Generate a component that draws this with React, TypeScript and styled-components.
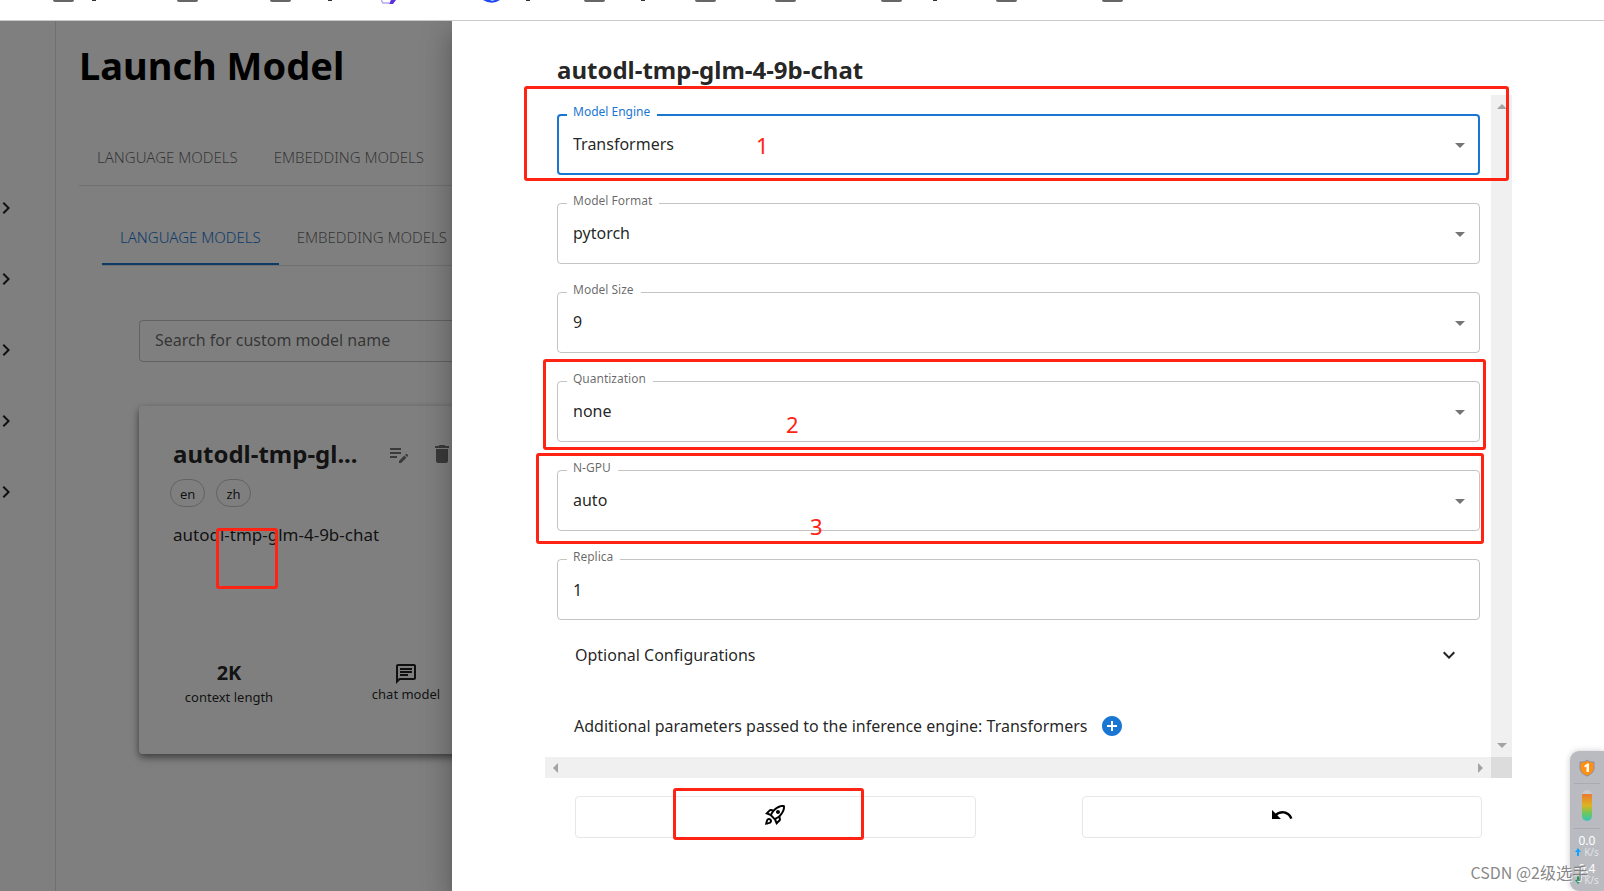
import React from "react";
import styled, { createGlobalStyle, css } from "styled-components";
import {
  MdAddCircle,
  MdArrowDropDown,
  MdChevronRight,
  MdDelete,
  MdEditNote,
  MdExpandMore,
  MdOutlineChat,
  MdOutlineRocketLaunch,
  MdOutlineUndo,
} from "react-icons/md";

const colors = {
  text: "rgba(0, 0, 0, 0.87)",
  muted: "rgba(0, 0, 0, 0.6)",
  line: "rgba(0, 0, 0, 0.23)",
  divider: "rgba(0, 0, 0, 0.12)",
  primary: "#1976d2",
  mark: "#ff2314",
};

const GlobalStyle = createGlobalStyle`
  *, *::before, *::after { box-sizing: border-box; }
  body {
    margin: 0;
    background: #fff;
    color: ${colors.text};
    font-family: "Noto Sans", "Noto Sans CJK SC", sans-serif;
    font-size: 16px;
  }
  button, input, select { font: inherit; color: inherit; }
  h1, h2, p, ul { margin: 0; padding: 0; }
  button { border: 0; background: none; padding: 0; cursor: pointer; }
  svg { display: block; flex: none; }
`;

const Page = styled.div`
  display: flex;
  flex-direction: column;
  min-height: 100vh;
  overflow: hidden;
`;

/* Browser bookmark strip */
const BookmarkBar = styled.div`
  display: flex;
  height: 21px;
  padding-left: 53px;
  border-bottom: 1px solid #c9cbcb;
  overflow: hidden;
`;

const Bookmark = styled.span<{ $width: number }>`
  display: flex;
  flex: none;
  width: ${(p) => p.$width}px;
`;

const FolderEdge = styled.span`
  width: 21px;
  height: 2px;
  border-radius: 0 0 3px 3px;
  background: #666;
`;

const LabelTail = styled.span<{ $gap: number }>`
  width: 4px;
  height: 1px;
  margin-left: ${(p) => p.$gap}px;
  background: #333;
`;

const Shell = styled.div`
  position: relative;
  display: flex;
  flex: 1;
`;

/* Page behind the drawer */
const Sidebar = styled.nav`
  display: flex;
  flex-direction: column;
  gap: 47px;
  flex: none;
  width: 56px;
  padding-top: 175px;
  border-right: 1px solid ${colors.divider};
`;

const NavButton = styled.button`
  display: flex;
  width: 24px;
  height: 24px;
  margin-left: -6px;
`;

const Main = styled.main`
  flex: 1;
  min-width: 0;
  padding: 16px 23px;
`;

const PageTitle = styled.h1`
  font-size: 38px;
  line-height: 56px;
  font-weight: 700;
  color: #000;
`;

const Tabs = styled.div<{ $nested?: boolean }>`
  display: flex;
  height: 49px;
  border-bottom: 1px solid ${colors.divider};
  ${(p) =>
    p.$nested
      ? css`
          margin: 31px 23px 0;
        `
      : css`
          margin-top: 44px;
        `}
`;

const Tab = styled.button<{ $active?: boolean }>`
  height: 48px;
  padding: 0 18px 7px;
  font-size: 15px;
  font-weight: 300;
  white-space: nowrap;
  color: ${(p) => (p.$active ? colors.primary : colors.muted)};
  border-bottom: 2px solid ${(p) => (p.$active ? colors.primary : "transparent")};
`;

const Search = styled.input`
  display: block;
  width: calc(100% - 120px);
  height: 42px;
  margin: 54px 60px 0;
  padding: 0 15px 2px;
  border: 1px solid ${colors.line};
  border-radius: 4px;
  background: transparent;
  &::placeholder {
    color: ${colors.muted};
    opacity: 1;
  }
`;

const Card = styled.article`
  width: 357px;
  height: 348px;
  margin: 44px 60px 0;
  padding: 32px 34px;
  border-radius: 4px;
  background: #fff;
  box-shadow: 0 3px 6px rgba(0, 0, 0, 0.4), 0 4px 12px rgba(0, 0, 0, 0.2);
`;

const CardHead = styled.div`
  display: flex;
  align-items: center;
`;

const CardTitle = styled.h2`
  flex: none;
  width: 190px;
  margin-right: 24px;
  font-size: 24px;
  line-height: 32px;
  font-weight: 700;
  white-space: nowrap;
`;

const CardActions = styled.div`
  display: flex;
  gap: 19px;
`;

const CardAction = styled.button`
  display: flex;
  color: rgba(0, 0, 0, 0.54);
`;

const Chips = styled.div`
  display: flex;
  gap: 11px;
  margin: 9px -3px 0;
`;

const Chip = styled.span`
  height: 28px;
  padding: 1px 9px 0;
  border: 1px solid ${colors.line};
  border-radius: 14px;
  font-size: 13px;
  line-height: 26px;
`;

const Description = styled.p`
  position: relative;
  margin-top: 16px;
  font-size: 17px;
  line-height: 24px;
`;

const Stats = styled.div`
  display: flex;
  justify-content: space-between;
  margin-top: 112px;
`;

const Stat = styled.div`
  display: flex;
  flex-direction: column;
  align-items: center;
  width: 112px;
  font-size: 13px;
  line-height: 20px;
  white-space: nowrap;

  > svg {
    margin: 3px 0 -2px;
  }
`;

const StatValue = styled.strong`
  font-size: 20px;
  line-height: 28px;
`;

const Backdrop = styled.div`
  position: absolute;
  inset: 0;
  background: rgba(0, 0, 0, 0.5);
`;

/* Launch drawer */
const Drawer = styled.section`
  position: absolute;
  inset: 0 0 0 452px;
  padding: 33px 92px 0 93px;
  background: #fff;
  box-shadow: 0 8px 10px -5px rgba(0, 0, 0, 0.2),
    0 16px 24px 2px rgba(0, 0, 0, 0.14), 0 6px 30px 5px rgba(0, 0, 0, 0.12);
  clip-path: inset(0 0 0 -60px);
`;

const DrawerTitle = styled.h2`
  margin: 0 12px 9px;
  font-size: 24px;
  line-height: 32px;
  font-weight: 700;
`;

const ScrollFrame = styled.div`
  display: grid;
  grid-template-columns: 1fr 21px;
  grid-template-rows: auto 21px;
`;

const Track = styled.div<{ $row?: boolean }>`
  display: flex;
  flex-direction: ${(p) => (p.$row ? "row" : "column")};
  justify-content: space-between;
  align-items: center;
  padding: ${(p) => (p.$row ? "0 8px" : "9px 0")};
  background: #f0f0f0;
  color: #a3a3a3;
`;

const Corner = styled.div`
  background: #dcdcdc;
`;

const Form = styled.form`
  display: flex;
  flex-direction: column;
  padding: 19px 11px 7px 12px;
`;

const Fields = styled.div`
  display: grid;
  gap: 28px;
`;

const FieldBox = styled.div<{ $focused?: boolean }>`
  position: relative;
  display: grid;
  height: 61px;
  color: ${(p) => (p.$focused ? colors.primary : colors.muted)};

  select,
  input {
    grid-area: 1 / 1;
    width: 100%;
    height: 100%;
    padding: 0 ${(p) => (p.$focused ? 14 : 15)}px;
    border: ${(p) =>
      p.$focused ? `2px solid ${colors.primary}` : `1px solid ${colors.line}`};
    border-radius: 4px;
    background: transparent;
    color: ${colors.text};
    appearance: none;
    outline: none;
  }

  select {
    padding-bottom: 2px;
  }

  > svg {
    grid-area: 1 / 1;
    align-self: center;
    justify-self: end;
    margin-right: 8px;
    color: rgba(0, 0, 0, 0.54);
    pointer-events: none;
  }
`;

const FieldLabel = styled.label`
  position: absolute;
  top: -12px;
  left: 10px;
  padding: 0 7px 0 6px;
  background: #fff;
  font-size: 12px;
  line-height: 20px;
`;

/* Review marks laid over the controls */
const Outline = styled.span<{ $inset: string; $width?: number }>`
  position: absolute;
  z-index: 2;
  inset: ${(p) => p.$inset};
  width: ${(p) => (p.$width ? `${p.$width}px` : "auto")};
  border: 3px solid ${colors.mark};
  border-radius: 3px;
  pointer-events: none;
`;

const Step = styled.span<{ $left: number; $top: number }>`
  position: absolute;
  left: ${(p) => p.$left}px;
  top: ${(p) => p.$top}px;
  font-size: 22px;
  line-height: 24px;
  color: ${colors.mark};
  pointer-events: none;
`;

const OptionalToggle = styled.button`
  display: flex;
  align-items: center;
  justify-content: space-between;
  height: 70px;
  padding: 0 19px 0 18px;
`;

const Extra = styled.div`
  display: flex;
  align-items: center;
  gap: 12px;
  height: 48px;
  margin-top: 12px;
  padding-left: 17px;
`;

const AddButton = styled.button`
  color: ${colors.primary};
`;

const Actions = styled.div`
  display: grid;
  grid-template-columns: 1fr 1fr;
  gap: 106px;
  margin: 18px 30px 0;
`;

const ActionButton = styled.button`
  position: relative;
  display: flex;
  align-items: center;
  justify-content: center;
  height: 42px;
  padding-bottom: 4px;
  border: 1px solid #e5e7eb;
  border-radius: 4px;
  color: #000;
`;

/* Desktop monitor widget */
const Monitor = styled.aside`
  position: absolute;
  right: 0;
  bottom: 0;
  display: flex;
  flex-direction: column;
  align-items: center;
  width: 34px;
  height: 140px;
  padding: 8px 4px 0;
  border-radius: 9px 0 0 9px;
  background: #b9bbc1;
  box-shadow: 0 0 6px rgba(0, 0, 0, 0.2);
  color: #fff;
`;

const GaugeRow = styled.span`
  display: flex;
  justify-content: center;
  width: 100%;
  margin-top: 6px;
  padding: 6px 0 7px;
  border: solid #a9abb1;
  border-width: 1px 0;
`;

const Gauge = styled.span`
  width: 10px;
  height: 31px;
  border-radius: 5px;
  background: linear-gradient(
    #c9c9cb 4px,
    #ec7a2e 4px,
    #dcb421 50%,
    #6cc75e 75%,
    #35c3bd
  );
`;

const Rate = styled.div`
  display: flex;
  flex-direction: column;
  align-items: center;
  margin-top: 6px;
  font-size: 12px;
  line-height: 12px;
`;

const Unit = styled.span`
  display: flex;
  align-items: center;
  gap: 3px;
  font-size: 10px;
  line-height: 10px;
  color: #e2e3e6;
`;

const Watermark = styled.span`
  position: absolute;
  right: 16px;
  bottom: 7px;
  font-family: "Noto Sans CJK SC", sans-serif;
  font-size: 16px;
  line-height: 24px;
  color: rgba(120, 120, 120, 0.9);
  text-shadow: 1px 1px 0 rgba(255, 255, 255, 0.8);
  pointer-events: none;
`;

type BookmarkItem = { kind: "folder" | "purple" | "blue"; width: number; tail?: number };

const bookmarks: BookmarkItem[] = [
  { kind: "folder", width: 124, tail: 18 },
  { kind: "folder", width: 93 },
  { kind: "folder", width: 111, tail: 37 },
  { kind: "purple", width: 102 },
  { kind: "blue", width: 101, tail: 26 },
  { kind: "folder", width: 111, tail: 36 },
  { kind: "folder", width: 80 },
  { kind: "folder", width: 106 },
  { kind: "folder", width: 115, tail: 31 },
  { kind: "folder", width: 106 },
  { kind: "folder", width: 21 },
];

const BookmarkIcon = ({ kind }: { kind: BookmarkItem["kind"] }) => {
  if (kind === "folder") return <FolderEdge />;
  if (kind === "purple")
    return (
      <svg width="15" height="4" viewBox="0 0 15 4">
        <path d="M0 0 L2 3 L8 3" stroke="#b9a3f5" strokeWidth="1.5" fill="none" />
        <path d="M10 0 H15 L12 4 H8Z" fill="#5b32e0" />
      </svg>
    );
  return (
    <svg width="17" height="3" viewBox="0 0 17 3">
      <path d="M0 0 H17 Q9 5.500 0 0Z" fill="#1f49f5" />
      <path d="M7 0 H12 L9 1Z" fill="#c4d2ff" />
    </svg>
  );
};

const Arrow = ({ dir }: { dir: "up" | "down" | "left" | "right" }) => {
  const shapes = {
    up: "M0 5 L5 0 L10 5Z",
    down: "M0 0 H10 L5 5Z",
    left: "M5 0 V10 L0 5Z",
    right: "M0 0 L5 5 L0 10Z",
  };
  const upright = dir === "up" || dir === "down";
  return (
    <svg width={upright ? 10 : 5} height={upright ? 5 : 10}>
      <path d={shapes[dir]} fill="currentColor" />
    </svg>
  );
};

const RateArrow = ({ down }: { down?: boolean }) => (
  <svg width="6" height="8" viewBox="0 0 6 8">
    <path
      d={down ? "M2 0H4V4H6L3 8L0 4H2Z" : "M2 8H4V4H6L3 0L0 4H2Z"}
      fill={down ? "#13a05c" : "#12a5ff"}
    />
  </svg>
);

type FieldProps = {
  id: string;
  label: string;
  value: string;
  focused?: boolean;
  input?: boolean;
  children?: React.ReactNode;
};

const Field = ({ id, label, value, focused, input, children }: FieldProps) => (
  <FieldBox $focused={focused}>
    {input ? (
      <input id={id} defaultValue={value} />
    ) : (
      <>
        <select id={id} defaultValue={value}>
          <option>{value}</option>
        </select>
        <MdArrowDropDown size={24} />
      </>
    )}
    <FieldLabel htmlFor={id}>{label}</FieldLabel>
    {children}
  </FieldBox>
);

const navItems = ["Models", "Running", "Register", "Cluster", "Contact"];

export default function App() {
  return (
    <Page>
      <GlobalStyle />
      <BookmarkBar>
        {bookmarks.map((b, i) => (
          <Bookmark key={i} $width={b.width}>
            <BookmarkIcon kind={b.kind} />
            {b.tail !== undefined && <LabelTail $gap={b.tail} />}
          </Bookmark>
        ))}
      </BookmarkBar>

      <Shell>
        <Sidebar>
          {navItems.map((item) => (
            <NavButton key={item} aria-label={item}>
              <MdChevronRight size={24} />
            </NavButton>
          ))}
        </Sidebar>

        <Main>
          <PageTitle>Launch Model</PageTitle>
          <Tabs>
            <Tab>LANGUAGE MODELS</Tab>
            <Tab>EMBEDDING MODELS</Tab>
          </Tabs>
          <Tabs $nested>
            <Tab $active>LANGUAGE MODELS</Tab>
            <Tab>EMBEDDING MODELS</Tab>
          </Tabs>
          <Search
            aria-label="Search for custom model name"
            placeholder="Search for custom model name"
          />
          <Card>
            <CardHead>
              <CardTitle>autodl-tmp-gl...</CardTitle>
              <CardActions>
                <CardAction aria-label="Edit">
                  <MdEditNote size={24} />
                </CardAction>
                <CardAction aria-label="Delete">
                  <MdDelete size={24} />
                </CardAction>
              </CardActions>
            </CardHead>
            <Chips>
              <Chip>en</Chip>
              <Chip>zh</Chip>
            </Chips>
            <Description>
              autodl-tmp-glm-4-9b-chat
              <Outline $inset="5px auto -42px 43px" $width={62} />
            </Description>
            <Stats>
              <Stat>
                <StatValue>2K</StatValue>
                <span>context length</span>
              </Stat>
              <Stat>
                <MdOutlineChat size={24} />
                <span>chat model</span>
              </Stat>
            </Stats>
          </Card>
        </Main>

        <Backdrop />

        <Drawer>
          <DrawerTitle>autodl-tmp-glm-4-9b-chat</DrawerTitle>
          <ScrollFrame>
            <Form>
              <Fields>
                <Field id="engine" label="Model Engine" value="Transformers" focused>
                  <Outline $inset="-28px -29px -6px -33px" />
                  <Step $left={199} $top={19}>1</Step>
                </Field>
                <Field id="format" label="Model Format" value="pytorch" />
                <Field id="size" label="Model Size" value="9" />
                <Field id="quantization" label="Quantization" value="none">
                  <Outline $inset="-22px -6px -8px -14px" />
                  <Step $left={229} $top={31}>2</Step>
                </Field>
                <Field id="gpu" label="N-GPU" value="auto">
                  <Outline $inset="-17px -4px -13px -21px" />
                  <Step $left={253} $top={44}>3</Step>
                </Field>
                <Field id="replica" label="Replica" value="1" input />
              </Fields>
              <OptionalToggle type="button">
                Optional Configurations
                <MdExpandMore size={24} />
              </OptionalToggle>
              <Extra>
                Additional parameters passed to the inference engine: Transformers
                <AddButton type="button" aria-label="Add parameter">
                  <MdAddCircle size={24} />
                </AddButton>
              </Extra>
            </Form>
            <Track>
              <Arrow dir="up" />
              <Arrow dir="down" />
            </Track>
            <Track $row>
              <Arrow dir="left" />
              <Arrow dir="right" />
            </Track>
            <Corner />
          </ScrollFrame>
          <Actions>
            <ActionButton aria-label="Launch">
              <MdOutlineRocketLaunch size={24} />
              <Outline $inset="-9px 111px -3px 97px" />
            </ActionButton>
            <ActionButton aria-label="Go back">
              <MdOutlineUndo size={24} />
            </ActionButton>
          </Actions>
        </Drawer>

        <Monitor>
          <svg width="16" height="18" viewBox="0 0 16 18">
            <path
              d="M8 1 C10 3 12 3 15 3 V9 C15 13 11 16 8 17 C5 16 1 13 1 9 V3 C4 3 6 3 8 1Z"
              fill="#ff9012"
              stroke="#8d8fa8"
            />
            <path d="M5.500 6.500 L8.500 4.500 H10 V13 H7.500 V7.500 L5.500 8.500Z" fill="#fff" />
          </svg>
          <GaugeRow>
            <Gauge />
          </GaugeRow>
          <Rate>
            0.0
            <Unit>
              <RateArrow /> K/s
            </Unit>
          </Rate>
          <Rate>
            0.4
            <Unit>
              <RateArrow down /> K/s
            </Unit>
          </Rate>
        </Monitor>
        <Watermark>CSDN @2级选手</Watermark>
      </Shell>
    </Page>
  );
}
